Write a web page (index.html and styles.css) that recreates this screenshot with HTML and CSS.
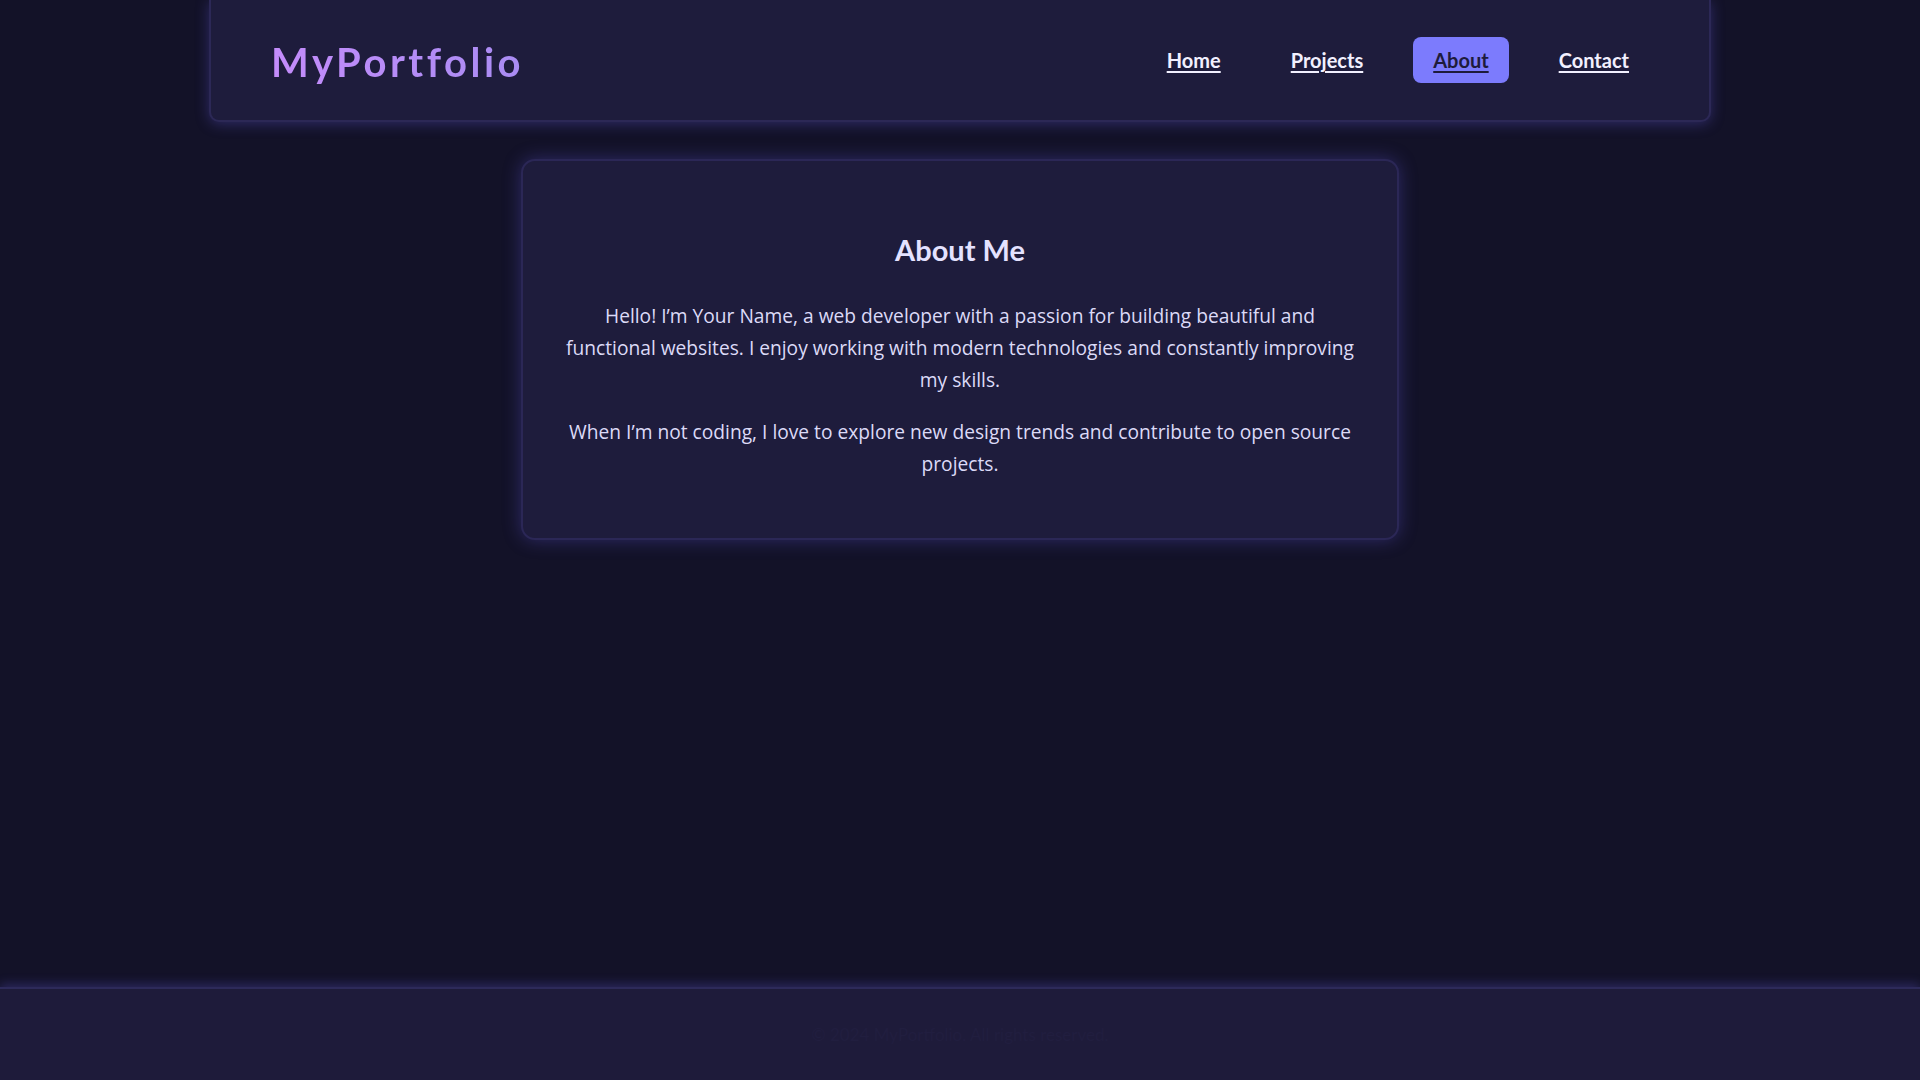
FILE: index.html
```html
<!DOCTYPE html>
<html lang="en">
<head>
    <meta charset="UTF-8">
    <meta name="viewport" content="width=device-width, initial-scale=1.0">
    <title>MyPortfolio - About</title>
    <link rel="stylesheet" href="styles.css">
</head>
<body>
    <header class="site-header">
        <div class="logo">MyPortfolio</div>
        <nav class="nav">
            <a href="#home" class="nav-link">Home</a>
            <a href="#projects" class="nav-link">Projects</a>
            <a href="#about" class="nav-link active">About</a>
            <a href="#contact" class="nav-link">Contact</a>
        </nav>
    </header>

    <main class="content">
        <section class="card" id="about">
            <h2>About Me</h2>
            <p>Hello! I’m Your Name, a web developer with a passion for building beautiful and functional websites. I enjoy working with modern technologies and constantly improving my skills.</p>
            <p>When I’m not coding, I love to explore new design trends and contribute to open source projects.</p>
        </section>
    </main>

    <footer class="site-footer">
        <p>&copy; 2024 MyPortfolio. All rights reserved.</p>
    </footer>
</body>
</html>
```

FILE: styles.css
```css
* {
    box-sizing: border-box;
}
body {
    background: #131228;
    color: #dcdaf7;
    font-family: 'Lato', 'Noto Sans', sans-serif;
    margin: 0;
    min-height: 100vh;
    display: flex;
    flex-direction: column;
}
.site-header {
    width: 1502px;
    height: 122px;
    margin: 0 auto;
    padding: 0 60px;
    display: flex;
    align-items: center;
    justify-content: space-between;
    background: #1e1c3c;
    border: 2px solid #2c2856;
    border-top: none;
    border-radius: 0 0 10px 10px;
    box-shadow: 0 2px 14px rgba(98, 88, 220, 0.35);
}
.logo {
    font-size: 40px;
    font-weight: 700;
    letter-spacing: 3.5px;
    background: linear-gradient(90deg, #c48cfb, #a98cf3);
    -webkit-background-clip: text;
    background-clip: text;
    color: transparent;
    padding-top: 4px;
}
.nav {
    display: flex;
    gap: 30px;
}
.nav-link {
    color: #f2f0ff;
    font-size: 20px;
    font-weight: 700;
    padding: 11px 20px;
    border-radius: 8px;
    text-decoration: underline;
    text-underline-offset: 3px;
    transition: 0.3s ease;
}
.nav-link:hover {
    color: #b9a8ff;
}
.nav-link.active {
    background: #7c7bfd;
    color: #1e1b3c;
}
.content {
    flex: 1;
    padding-top: 37px;
}
.card {
    width: 878px;
    margin: 0 auto;
    padding: 40px 40px 42px;
    text-align: center;
    background: #1e1c3c;
    border: 2px solid #2b2756;
    border-radius: 14px;
    box-shadow: 0 0 18px rgba(98, 88, 220, 0.35);
}
.card h2 {
    margin: 31px 0 33px;
    font-size: 29px;
    line-height: 35px;
    font-weight: 700;
    color: #e4e2ff;
}
.card p {
    margin: 0 0 20px;
    font-family: 'Open Sans', 'Noto Sans', sans-serif;
    font-size: 19.2px;
    line-height: 32px;
}
.card p:last-child {
    margin-bottom: 16px;
}
.site-footer {
    height: 93px;
    display: flex;
    align-items: center;
    justify-content: center;
    background: #1e1b3a;
    border-top: 2px solid #2d2a5a;
    box-shadow: 0 -3px 10px rgba(98, 88, 220, 0.3);
}
.site-footer p {
    margin: 0;
    font-size: 17px;
    color: #211e3f;
}
```
